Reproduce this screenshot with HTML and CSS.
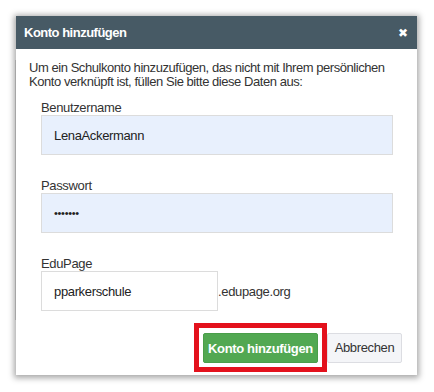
FILE: index.html
```html
<!DOCTYPE html>
<html>
<head>
<meta charset="utf-8">
<link rel="stylesheet" href="styles.css">
</head>
<body>
<div class="page">
  <div class="bg-line bg-line-a"></div>
  <div class="dialog">
    <div class="header">
      <span class="title">Konto hinzufügen</span>
      <span class="close">✖</span>
    </div>
    <div class="content">
      <p class="intro">Um ein Schulkonto hinzuzufügen, das nicht mit Ihrem persönlichen<br>Konto verknüpft ist, füllen Sie bitte diese Daten aus:</p>
      <div class="form">
        <div class="field">
          <label class="label">Benutzername</label>
          <div class="input filled">LenaAckermann</div>
        </div>
        <div class="field">
          <label class="label">Passwort</label>
          <div class="input filled pw">•••••••</div>
        </div>
        <div class="field last">
          <label class="label">EduPage</label>
          <div class="domain-row">
            <div class="input small">pparkerschule</div>
            <span class="suffix">.edupage.org</span>
          </div>
        </div>
      </div>
      <div class="actions">
        <span class="highlight"><button class="btn primary">Konto hinzufügen</button></span>
        <button class="btn secondary">Abbrechen</button>
      </div>
    </div>
  </div>
</div>
</body>
</html>
```

FILE: styles.css
```css
* { box-sizing: border-box; }
html, body {
  margin: 0;
  padding: 0;
  background: #ffffff;
  font-family: "Liberation Sans", Arial, sans-serif;
  font-size: 13px;
  color: #333;
}
.page {
  width: 434px;
  height: 392px;
  padding: 16px 0 0 16px;
  position: relative;
}
.bg-line {
  position: absolute;
}
.bg-line-a { left: 15px; top: 60px; width: 1px; height: 260px; background: #d8d8d8; }
.dialog {
  position: relative;
  width: 401px;
  height: 359px;
  background: #fff;
  box-shadow: 0 1px 6px 2px rgba(0,0,0,0.35);
  display: flex;
  flex-direction: column;
}
.header {
  height: 33px;
  background: #475a65;
  color: #fff;
  display: flex;
  align-items: center;
  justify-content: space-between;
  padding: 0 9px 0 8px;
}
.title {
  font-weight: bold;
  font-size: 13px;
  letter-spacing: -0.5px;
}
.close {
  font-size: 12px;
  font-weight: bold;
  font-family: "DejaVu Sans", sans-serif;
}
.content {
  padding: 12px 13px 0 13px;
  flex: 1;
  display: flex;
  flex-direction: column;
}
.intro {
  margin: 0;
  line-height: 14px;
  font-size: 13px;
  letter-spacing: -0.45px;
  color: #333;
  white-space: nowrap;
}
.form {
  padding: 0 12px;
  margin-top: 12px;
}
.field {
  display: flex;
  flex-direction: column;
  margin-bottom: 24px;
}
.field.last { margin-bottom: 0; }
.label {
  font-size: 13px;
  letter-spacing: -0.35px;
  color: #333;
  line-height: 14px;
}
.input {
  height: 40px;
  border: 1px solid #dcdcdc;
  padding: 0 12px;
  display: flex;
  align-items: center;
  font-size: 13px;
  letter-spacing: -0.35px;
  color: #222;
}
.filled {
  background: #e8f0fd;
  width: 352px;
}
.pw {
  font-size: 11px;
  letter-spacing: -0.3px;
  color: #222;
  padding-left: 12px;
}
.domain-row {
  display: flex;
  align-items: center;
}
.small {
  width: 177px;
  background: #fff;
}
.suffix {
  font-size: 13px;
  letter-spacing: -0.35px;
  color: #333;
}
.actions {
  display: flex;
  justify-content: flex-end;
  align-items: center;
  margin-top: 12px;
  padding-right: 2px;
}
.highlight {
  display: inline-flex;
  border: 5px solid #e3111c;
  padding: 5px 4px 4px 4px;
}
.btn {
  height: 30px;
  font-family: "Liberation Sans", Arial, sans-serif;
  font-size: 13px;
  letter-spacing: -0.35px;
  border-radius: 2px;
  white-space: nowrap;
  padding: 0;
  cursor: pointer;
}
.primary {
  width: 115px;
  background: #52a852;
  border: 1px solid #4a9e4a;
  color: #fff;
  font-weight: bold;
}
.secondary {
  width: 75px;
  background: #f4f5f8;
  border: 1px solid #dcdde2;
  color: #333;
}
```
